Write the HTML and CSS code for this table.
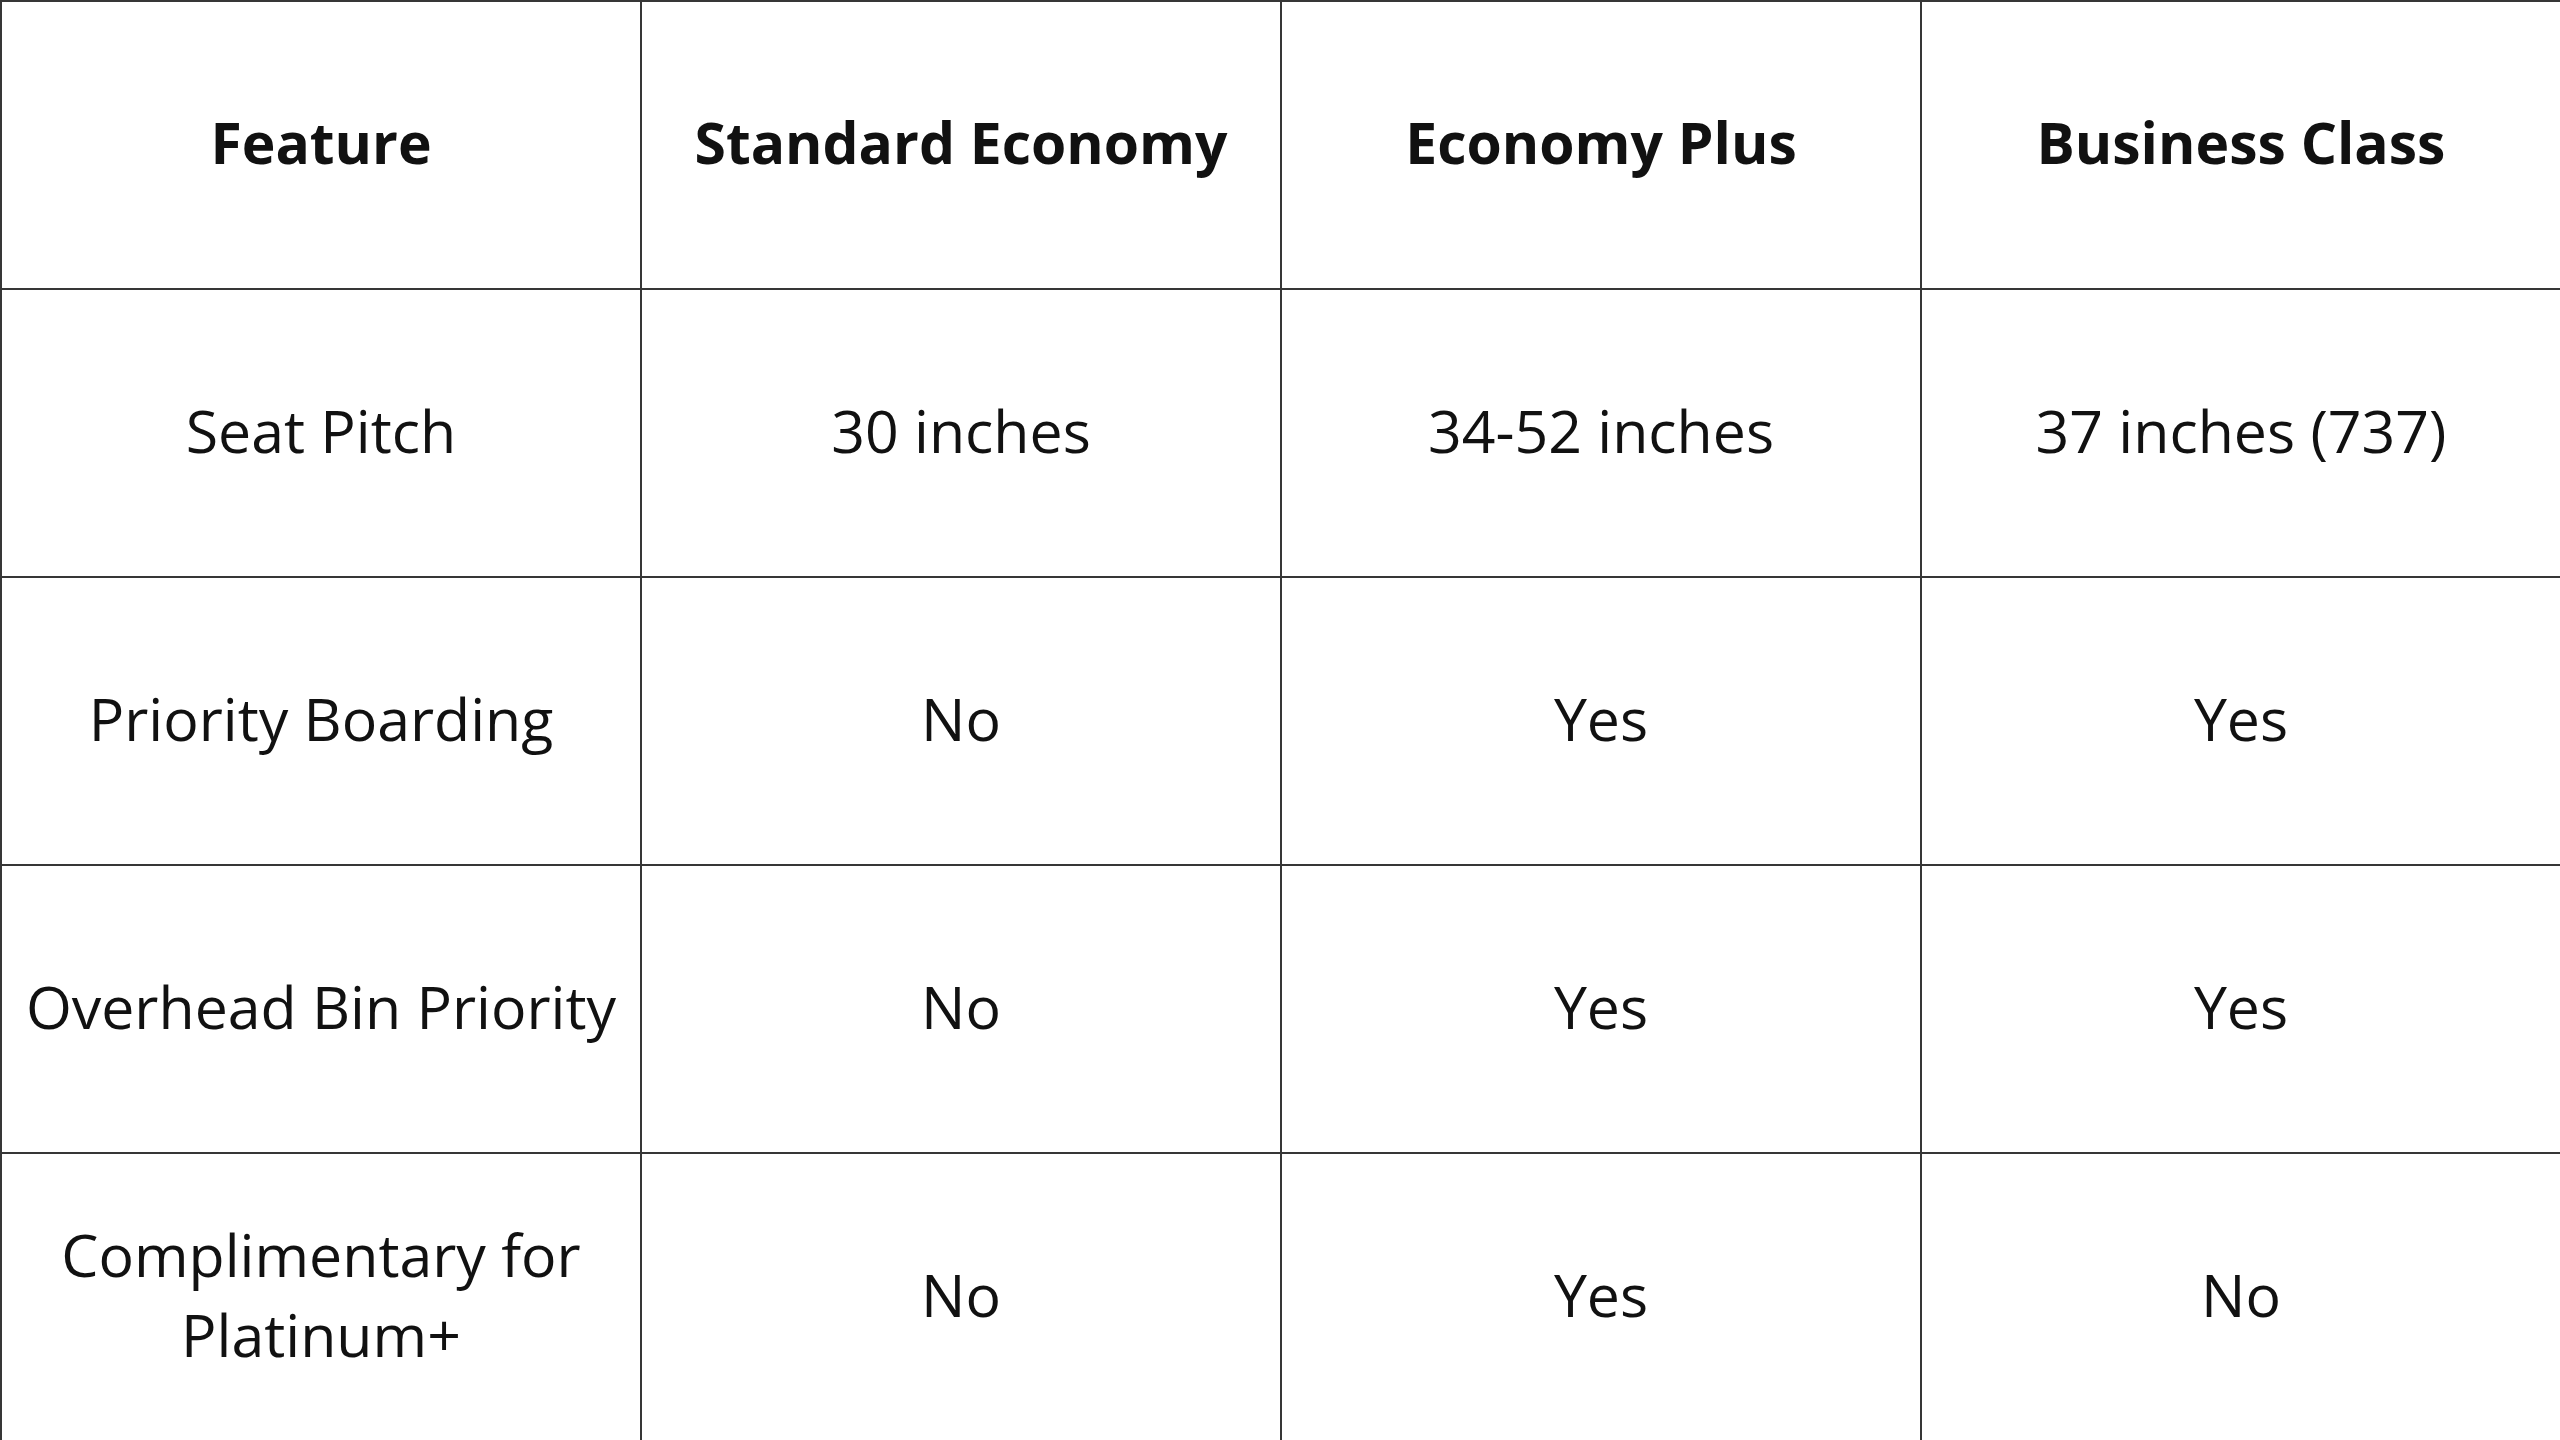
FILE: index.html
```html
<!DOCTYPE html>
<html lang="en">
<head>
<meta charset="utf-8">
<title>Seat Comparison</title>
<link rel="stylesheet" href="styles.css">
</head>
<body>
<table class="compare">
  <thead>
    <tr>
      <th>Feature</th>
      <th>Standard Economy</th>
      <th>Economy Plus</th>
      <th>Business Class</th>
    </tr>
  </thead>
  <tbody>
    <tr>
      <td>Seat Pitch</td>
      <td>30 inches</td>
      <td>34-52 inches</td>
      <td>37 inches (737)</td>
    </tr>
    <tr>
      <td>Priority Boarding</td>
      <td>No</td>
      <td>Yes</td>
      <td>Yes</td>
    </tr>
    <tr>
      <td>Overhead Bin Priority</td>
      <td>No</td>
      <td>Yes</td>
      <td>Yes</td>
    </tr>
    <tr>
      <td>Complimentary for<br>Platinum+</td>
      <td>No</td>
      <td>Yes</td>
      <td>No</td>
    </tr>
  </tbody>
</table>
</body>
</html>
```

FILE: styles.css
```css
html, body {
  margin: 0;
  padding: 0;
  background: #ffffff;
}

.compare {
  width: 2560px;
  height: 1440px;
  border-collapse: collapse;
  table-layout: fixed;
  font-family: "Open Sans", "Noto Sans", sans-serif;
  color: #111111;
}

.compare th,
.compare td {
  width: 640px;
  height: 288px;
  box-sizing: border-box;
  border: 2px solid #363636;
  text-align: center;
  vertical-align: middle;
  padding: 0 4px 6px;
  line-height: 80px;
}

.compare th {
  font-weight: 700;
  font-size: 57px;
}

.compare td {
  font-weight: 400;
  font-size: 59px;
}
```
